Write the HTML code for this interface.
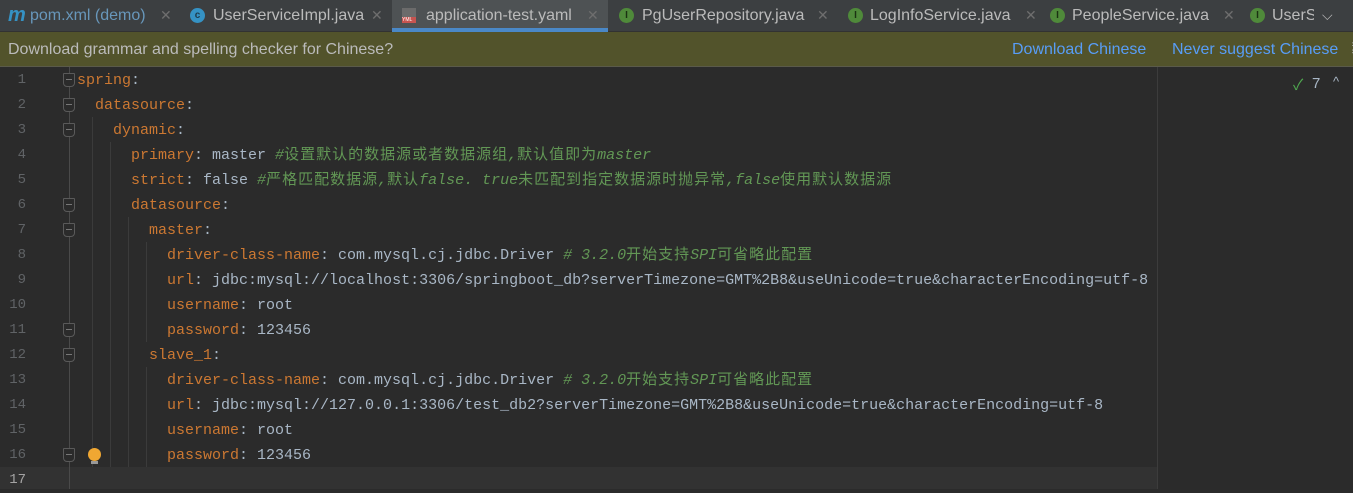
<!DOCTYPE html>
<html><head><meta charset="utf-8"><style>
*{margin:0;padding:0;box-sizing:border-box}
body{width:1353px;height:489px;overflow:hidden;background:#2b2b2b;font-family:"Liberation Sans","Noto Sans CJK SC",sans-serif;position:relative}
#tabs{position:absolute;left:0;top:0;width:1353px;height:32px;background:#3c3f41;border-bottom:1px solid #323232}
.t{position:absolute;top:0;height:31px;line-height:31px;font-size:16px;color:#bbbbbb;white-space:nowrap}
.x{position:absolute;top:0;line-height:31px;color:#6e6e6e;font-size:14px}
.ic{position:absolute;top:8px;width:15px;height:15px;border-radius:50%;font-size:10px;line-height:15px;text-align:center;font-weight:bold}
.ci{background:#3592c4;color:#1e3a4a}.ii{background:#4f8a3a;color:#1b3212}
#note{position:absolute;left:0;top:32px;width:1353px;height:35px;background:#52532b;border-bottom:1px solid #5a5a4a;font-size:16px;color:#bbbbbb;line-height:35px}
#note a{position:absolute;color:#589df6;top:0}
.row{position:absolute;left:0;height:25px;width:1157px;line-height:25px}
.ln{position:absolute;left:0;width:26px;text-align:right;color:#606366;font-family:"Liberation Mono",monospace;font-size:14px}
.code{position:absolute;left:77px;white-space:pre;font-family:"Liberation Mono","Noto Sans CJK SC",monospace;font-size:15px;color:#a9b7c6}
.k{color:#cc7832}.c{color:#629755;font-style:italic}
.z{letter-spacing:1px;font-style:normal}
.g{position:absolute;width:1px;background:#3b3b3b}
.fold{position:absolute;left:63px;width:12px;height:14px;border:1px solid #5a5a5a;background:#2b2b2b;border-radius:1px 1px 4px 4px}
.fold:after{content:"";position:absolute;left:2px;top:5px;width:6px;height:1px;background:#777}
</style></head><body>
<div id="tabs">
<div style="position:absolute;left:392px;top:0;width:216px;height:32px;background:#4e5254"></div>
<div style="position:absolute;left:392px;top:28px;width:216px;height:4px;background:#4a88c7"></div>
<div class="t" style="left:8px;color:#3592c4;font-weight:bold;font-style:italic;font-size:20px">m</div>
<div class="t" style="left:30px;color:#6897bb">pom.xml (demo)</div><span class="x" style="left:160px">✕</span>
<span class="ic ci" style="left:190px">c</span>
<div class="t" style="left:213px">UserServiceImpl.java</div><span class="x" style="left:371px">✕</span>
<span style="position:absolute;left:402px;top:8px;width:14px;height:15px;background:#6b6b6b"><span style="position:absolute;left:0;bottom:0;width:14px;height:6px;background:#c75450;font-size:5px;line-height:6px;color:#fff">YML</span></span>
<div class="t" style="left:426px">application-test.yaml</div><span class="x" style="left:587px">✕</span>
<span class="ic ii" style="left:619px">I</span>
<div class="t" style="left:642px">PgUserRepository.java</div><span class="x" style="left:817px">✕</span>
<span class="ic ii" style="left:848px">I</span>
<div class="t" style="left:870px">LogInfoService.java</div><span class="x" style="left:1025px">✕</span>
<span class="ic ii" style="left:1050px">I</span>
<div class="t" style="left:1072px">PeopleService.java</div><span class="x" style="left:1223px">✕</span>
<span class="ic ii" style="left:1250px">I</span>
<div class="t" style="left:1272px">UserS</div>
<div style="position:absolute;left:1314px;top:0;width:39px;height:31px;background:#3c3f41;color:#bbb;font-size:14px;line-height:31px;padding-left:8px">⌵</div>
</div>
<div id="note"><span style="margin-left:8px">Download grammar and spelling checker for Chinese?</span>
<a style="left:1012px">Download Chinese</a><a style="left:1172px">Never suggest Chinese</a><span style="position:absolute;left:1347px;color:#bbb">⁑</span></div>
<div style="position:absolute;left:0;top:467px;width:1157px;height:22px;background:#323232"></div>
<div style="position:absolute;left:1157px;top:67px;width:1px;height:422px;background:#3c3c3c"></div>
<div style="position:absolute;left:1293px;top:74px;color:#4fa84f;font-size:15px">✓</div>
<div style="position:absolute;left:1312px;top:75px;color:#a9b7c6;font-size:15px">7</div>
<div style="position:absolute;left:1333px;top:74px;color:#a9b7c6;font-size:13px">^</div>
<div class="g" style="left:69px;top:67px;height:422px;background:#4a4a4a"></div>
<div class="g" style="left:92px;top:117px;height:350px"></div>
<div class="g" style="left:110px;top:142px;height:325px"></div>
<div class="g" style="left:128px;top:217px;height:250px"></div>
<div class="g" style="left:146px;top:242px;height:100px"></div>
<div class="g" style="left:146px;top:367px;height:100px"></div>
<div class="fold" style="top:73px"></div><div class="fold" style="top:98px"></div><div class="fold" style="top:123px"></div>
<div class="fold" style="top:198px"></div><div class="fold" style="top:223px"></div><div class="fold" style="top:323px"></div>
<div class="fold" style="top:348px"></div><div class="fold" style="top:448px"></div>
<div style="position:absolute;left:88px;top:448px;width:13px;height:13px;border-radius:50%;background:#f0a732"></div>
<div style="position:absolute;left:91px;top:461px;width:7px;height:3px;background:#999"></div>

<div class="row" style="top:68px"><span class="ln">1</span><span class="code"><span class="k">spring</span>:</span></div>
<div class="row" style="top:93px"><span class="ln">2</span><span class="code">  <span class="k">datasource</span>:</span></div>
<div class="row" style="top:118px"><span class="ln">3</span><span class="code">    <span class="k">dynamic</span>:</span></div>
<div class="row" style="top:143px"><span class="ln">4</span><span class="code">      <span class="k">primary</span>: master <span class="c">#<span class="z">设置默认的数据源或者数据源组</span>,<span class="z">默认值即为</span>master</span></span></div>
<div class="row" style="top:168px"><span class="ln">5</span><span class="code">      <span class="k">strict</span>: false <span class="c">#<span class="z">严格匹配数据源</span>,<span class="z">默认</span>false. true<span class="z">未匹配到指定数据源时抛异常</span>,false<span class="z">使用默认数据源</span></span></span></div>
<div class="row" style="top:193px"><span class="ln">6</span><span class="code">      <span class="k">datasource</span>:</span></div>
<div class="row" style="top:218px"><span class="ln">7</span><span class="code">        <span class="k">master</span>:</span></div>
<div class="row" style="top:243px"><span class="ln">8</span><span class="code">          <span class="k">driver-class-name</span>: com.mysql.cj.jdbc.Driver <span class="c"># 3.2.0<span class="z">开始支持</span>SPI<span class="z">可省略此配置</span></span></span></div>
<div class="row" style="top:268px"><span class="ln">9</span><span class="code">          <span class="k">url</span>: jdbc:mysql://localhost:3306/springboot_db?serverTimezone=GMT%2B8&amp;useUnicode=true&amp;characterEncoding=utf-8</span></div>
<div class="row" style="top:293px"><span class="ln">10</span><span class="code">          <span class="k">username</span>: root</span></div>
<div class="row" style="top:318px"><span class="ln">11</span><span class="code">          <span class="k">password</span>: 123456</span></div>
<div class="row" style="top:343px"><span class="ln">12</span><span class="code">        <span class="k">slave_1</span>:</span></div>
<div class="row" style="top:368px"><span class="ln">13</span><span class="code">          <span class="k">driver-class-name</span>: com.mysql.cj.jdbc.Driver <span class="c"># 3.2.0<span class="z">开始支持</span>SPI<span class="z">可省略此配置</span></span></span></div>
<div class="row" style="top:393px"><span class="ln">14</span><span class="code">          <span class="k">url</span>: jdbc:mysql://127.0.0.1:3306/test_db2?serverTimezone=GMT%2B8&amp;useUnicode=true&amp;characterEncoding=utf-8</span></div>
<div class="row" style="top:418px"><span class="ln">15</span><span class="code">          <span class="k">username</span>: root</span></div>
<div class="row" style="top:443px"><span class="ln">16</span><span class="code">          <span class="k">password</span>: 123456</span></div>
<div class="row" style="top:468px"><span class="ln" style="color:#a4a3a3">17</span></div>
</body></html>
